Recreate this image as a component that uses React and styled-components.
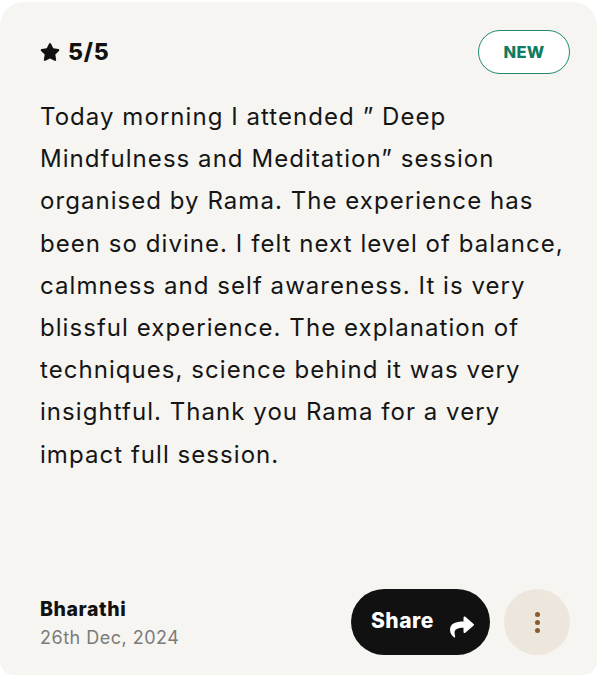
import styled, { createGlobalStyle } from "styled-components";
import { FaStar, FaShare } from "react-icons/fa";

const Global = createGlobalStyle`
    body {
        margin: 0;
        background: #ffffff;
        font-family: 'Inter', 'Liberation Sans', sans-serif;
    }
`

export default function App() {
    return (
        <>
            <Global />
            <Card>
                <Header>
                    <Rating><FaStar /> 5/5</Rating>
                    <Badge>NEW</Badge>
                </Header>
                <Review>
                    Today morning I attended ” Deep Mindfulness and Meditation” session organised by Rama. The experience has been so divine. I felt next level of balance, calmness and self awareness. It is very blissful experience. The explanation of techniques, science behind it was very insightful. Thank you Rama for a very impact full session.
                </Review>
                <Footer>
                    <Author>
                        <h4>Bharathi</h4>
                        <span>26th Dec, 2024</span>
                    </Author>
                    <Actions>
                        <ShareButton>Share <FaShare /></ShareButton>
                        <MoreButton aria-label="more">
                            <i /><i /><i />
                        </MoreButton>
                    </Actions>
                </Footer>
            </Card>
        </>
    )
}

const Card = styled.div`
    box-sizing: border-box;
    margin: 2px 3px 0 0;
    height: 673px;
    background-color: #f6f5f1;
    border-radius: 24px 24px 14px 14px;
    padding: 28px 27px 20px 40px;
    display: flex;
    flex-direction: column;
`

const Header = styled.div`
    display: flex;
    align-items: center;
    justify-content: space-between;
`

const Rating = styled.div`
    display: flex;
    align-items: center;
    gap: 8px;
    font-weight: 800;
    font-size: 23px;
    letter-spacing: 0.8px;
    color: #111111;
    svg{
        width: 20px;
        height: 20px;
    }
`

const Badge = styled.div`
    box-sizing: border-box;
    width: 92px;
    height: 44px;
    border: 1.5px solid #1f8a6f;
    border-radius: 22px;
    background-color: #ffffff;
    display: flex;
    align-items: center;
    justify-content: center;
    color: #0f7c62;
    font-weight: 800;
    font-size: 16.5px;
    letter-spacing: 0.3px;
`

const Review = styled.p`
    margin: 22px 0 0 0;
    max-width: 530px;
    font-size: 24px;
    letter-spacing: 1.05px;
    line-height: 42.2px;
    color: #151515;
`

const Footer = styled.div`
    margin-top: auto;
    display: flex;
    align-items: center;
    justify-content: space-between;
`

const Author = styled.div`
    display: flex;
    flex-direction: column;
    gap: 6px;
    h4{
        margin: 0;
        font-size: 19.5px;
        font-weight: 800;
        letter-spacing: 0.6px;
        color: #111111;
    }
    span{
        font-size: 18px;
        letter-spacing: 0.5px;
        color: #7b7b7b;
    }
`

const Actions = styled.div`
    display: flex;
    align-items: center;
    gap: 14px;
`

const ShareButton = styled.button`
    border: none;
    cursor: pointer;
    width: 139px;
    height: 66px;
    border-radius: 33px;
    background-color: #111111;
    color: #ffffff;
    font-family: inherit;
    font-weight: 800;
    font-size: 21px;
    letter-spacing: 0.5px;
    display: flex;
    align-items: center;
    gap: 16px;
    padding: 0 0 4px 20px;
    svg{
        width: 24px;
        height: 24px;
        margin-top: 14px;
    }
`

const MoreButton = styled.button`
    border: none;
    cursor: pointer;
    width: 66px;
    height: 66px;
    border-radius: 50%;
    background-color: #ede6dc;
    display: flex;
    flex-direction: column;
    align-items: center;
    justify-content: center;
    gap: 3px;
    i{
        width: 5px;
        height: 5px;
        border-radius: 50%;
        background-color: #8b5a2b;
    }
`
